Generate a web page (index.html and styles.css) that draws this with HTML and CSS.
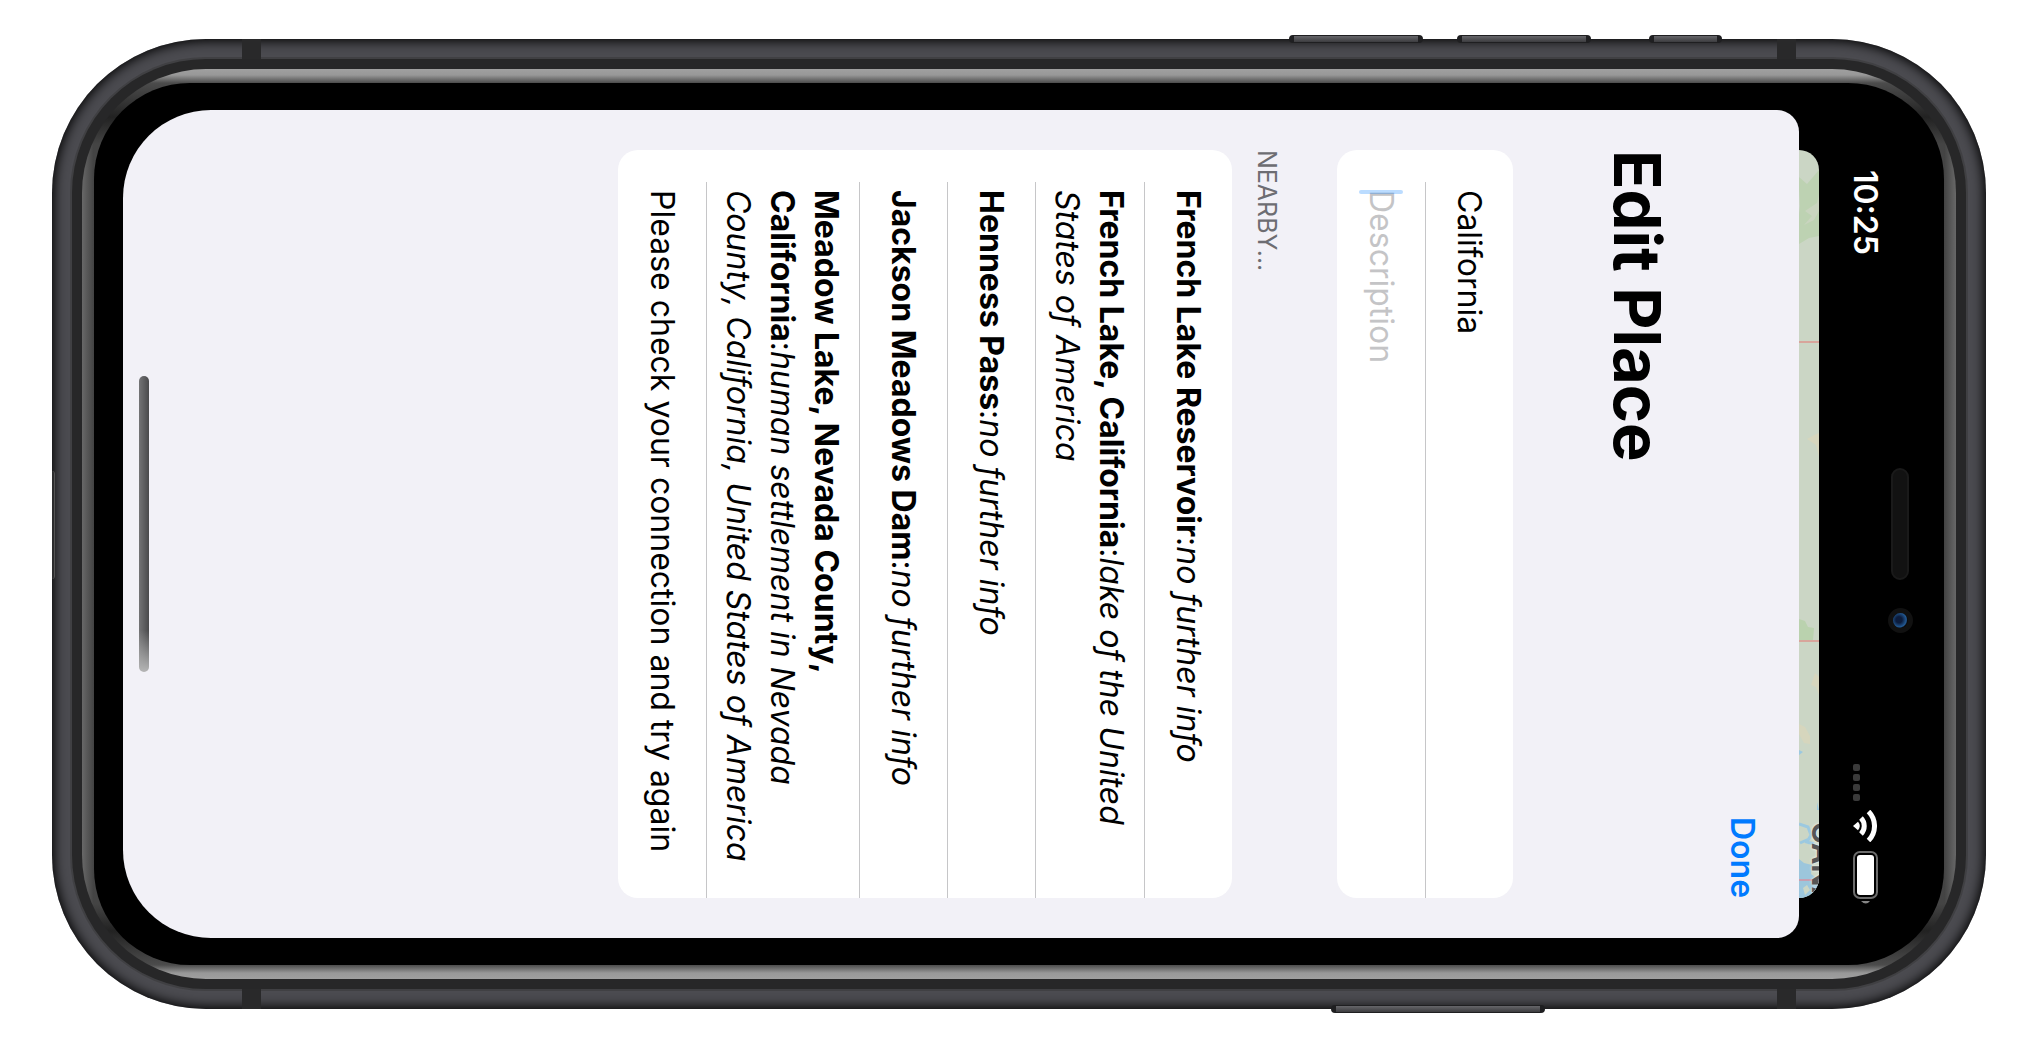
FILE: index.html
```html
<!DOCTYPE html>
<html lang="en">
<head>
<meta charset="utf-8">
<meta name="viewport" content="width=device-width, initial-scale=1">
<title>Edit Place</title>
<link rel="stylesheet" href="styles.css">
</head>
<body>
<div class="phone">
  <span class="key key-volume-down"></span>
  <span class="key key-volume-up"></span>
  <span class="key key-mute"></span>
  <span class="key key-power"></span>
  <div class="metal">
    <span class="antenna antenna-start antenna-top"></span>
    <span class="antenna antenna-end antenna-top"></span>
    <span class="antenna antenna-start antenna-bottom"></span>
    <span class="antenna antenna-end antenna-bottom"></span>
    <span class="tray"></span>
    <div class="bezel">
      <div class="rim">
        <div class="glass">
          <main class="sheet">
            <nav class="nav"><button class="done" type="button">Done</button></nav>
            <h1 class="title">Edit Place</h1>
            <form class="card">
              <div class="row"><input class="field" type="text" aria-label="Place name" value="California"></div>
              <div class="row"><input class="field" type="text" aria-label="Description" placeholder="Description"><span class="caret"></span></div>
            </form>
            <h2 class="section-title">NEARBY...</h2>
            <ul class="card">
              <li class="row"><p><b>French Lake Reservoir</b>:<i>no further info</i></p></li>
              <li class="row"><p><b>French Lake, California</b>:<i>lake of the United States of America</i></p></li>
              <li class="row"><p><b>Henness Pass</b>:<i>no further info</i></p></li>
              <li class="row"><p><b>Jackson Meadows Dam</b>:<i>no further info</i></p></li>
              <li class="row"><p><b>Meadow Lake, Nevada County, California</b>:<i>human settlement in Nevada County, California, United States of America</i></p></li>
              <li class="row"><p>Please check your connection and try again</p></li>
            </ul>
            <span class="home-indicator"></span>
          </main>
          <div class="map">
            <svg class="map-art" viewBox="0 0 20 748" preserveAspectRatio="none" aria-hidden="true">
              <path fill="#bdd2b2" d="M0 27l8 7 12-14v66l-10 2-10 6V64l1-8-1-16z"/>
              <path fill="#c9d4bf" d="M20 44l-2 9-12 8 7 5-8 9 10-5 5-9z"/>
              <path fill="#d6d6bd" d="M8 289l7-4 5-2v24l-3-12zM16 523l-4 12 5 2 3 8v-18zM0 574l6 3 5 9v8l-6-1-5-9z"/>
              <path fill="#bad2ae" d="M0 469l6 2 3 6 6 1-1 12-14 1z"/>
              <path stroke="#d8a59b" stroke-width="2" d="M0 192h20M0 491h20"/>
              <path fill="#9cc9e0" d="M0 600l4 2-4 3zM18 652l2 8h-2z"/>
              <path fill="none" stroke="#9cc9e0" stroke-width="3" d="M0 674l9 3 3 8-4 7 7 2M10 689l-9 4"/>
              <path fill="#9cc6dc" d="M0 709l5 4 8 2-1 9 8 6v18H0z"/>
              <path fill="#cbd6c5" d="M4 738l4-3 3 5-5 5z"/>
              <path stroke="#c79eb0" stroke-width="2" d="M0 730h20"/>
            </svg>
            <span class="map-label">CANA</span>
          </div>
          <div class="status">
            <time class="clock">10:25</time>
            <div class="indicators">
              <svg class="signal" viewBox="0 0 24 37" aria-hidden="true">
                <g fill="#3a3a3a"><rect width="7" height="7" rx="2"/><rect y="10" width="7" height="7" rx="2"/><rect y="20" width="7" height="7" rx="2"/><rect y="30" width="7" height="7" rx="2"/></g>
              </svg>
              <svg class="wifi" viewBox="0 0 24 32" aria-hidden="true">
                <path fill="#fff" d="M0 16l5-4.200a6.500 6.500 0 0 1 0 8.400z"/>
                <path fill="none" stroke="#fff" stroke-width="5" d="M8 8a11.500 11.500 0 0 1 0 16M15.500 1.500a20.500 20.500 0 0 1 0 29"/>
              </svg>
              <svg class="battery" viewBox="0 0 25 53" aria-hidden="true">
                <rect x="1" y="1" width="23" height="46" rx="6" fill="none" stroke="#6c6c6c" stroke-width="2"/>
                <rect x="4" y="4" width="17" height="40" rx="3" fill="#fff"/>
                <path fill="#858585" d="M8 50h9q-4 5-9 0z"/>
              </svg>
            </div>
          </div>
          <div class="notch">
            <span class="speaker"></span>
            <span class="camera"></span>
          </div>
        </div>
      </div>
    </div>
  </div>
</div>
</body>
</html>
```
FILE: styles.css
```css
* { box-sizing: border-box; }

body {
  display: flex;
  height: 100vh;
  margin: 0;
  background: #fff;
  color: #000;
  font-family: Inter, "Liberation Sans", sans-serif;
  font-size: 32px;
}

/* Handset, lying on its side */
.phone {
  position: relative;
  display: flex;
  flex: 1;
  margin: 39px 39px 39px 52px;
}

.metal, .bezel, .rim { display: flex; flex: 1; }

.metal {
  position: relative;
  padding: 20px;
  border-radius: 154px;
  background: #4b4b50;
  box-shadow: inset 0 0 12px 2px #000;
}

.bezel {
  padding: 10px;
  border-radius: 134px;
  background: #272728;
  box-shadow: 0 0 0 2px #404043;
}

.rim {
  padding: 14px 12px;
  border-radius: 124px;
  background:
    linear-gradient(90deg, #686868, #424242) 0 50% / 12px calc(100% - 150px) no-repeat,
    linear-gradient(270deg, #686868, #424242) 100% 50% / 12px calc(100% - 150px) no-repeat,
    linear-gradient(#a0a0a0, #989898 6px, #4c4c4c 14px, #222 48px, #444 75px, #444 calc(100% - 75px), #222 calc(100% - 48px), #4c4c4c calc(100% - 14px), #989898 calc(100% - 6px), #a0a0a0);
}

.glass {
  display: flex;
  flex: 1;
  padding: 27px 0 27px 29px;
  border-radius: 96px;
  background: #000;
}

.antenna {
  position: absolute;
  width: 19px;
  height: 20px;
  background: #29292a;
}
.antenna-start { left: 190px; }
.antenna-end { right: 190px; }
.antenna-top { top: 0; }
.antenna-bottom { bottom: 0; }

.tray {
  position: absolute;
  top: 432px;
  left: 0;
  width: 3px;
  height: 108px;
  border-radius: 0 3px 3px 0;
  background: #2c2c2d;
  border-right: 1px solid #555;
}

.key {
  position: absolute;
  z-index: 1;
  top: -4px;
  height: 8px;
  border: solid #1f1f21;
  border-width: 1px 5px;
  border-radius: 4px;
  background: linear-gradient(#66666a, #3c3c3f);
}
.key-volume-down { right: 563px; width: 134px; }
.key-volume-up { right: 395px; width: 134px; }
.key-mute { right: 264px; width: 73px; }
.key-power { top: auto; bottom: -4px; right: 441px; width: 214px; }

/* Sheet: lines run top to bottom, blocks stack right to left */
.sheet {
  position: relative;
  flex: 1;
  padding-inline: 40px;
  border-radius: 88px 22px 22px 88px;
  background: #f2f1f7;
  writing-mode: vertical-rl;
  text-orientation: sideways;
}

.nav {
  display: flex;
  justify-content: flex-end;
  align-items: center;
  block-size: 114px;
}

.done {
  padding: 0;
  border: 0;
  background: none;
  color: #007aff;
  font: inherit;
  font-weight: 600;
  line-height: 44px;
  writing-mode: inherit;
}

.title {
  margin: 0;
  font-size: 65px;
  font-weight: 700;
  line-height: 96px;
  margin-block-end: 76px;
}

.section-title {
  margin: 0;
  margin-block: 53px 18px;
  color: #6d6d72;
  font-size: 25px;
  font-weight: 400;
  line-height: 34px;
}

.card {
  margin: 0;
  padding: 0;
  border-radius: 20px;
  background: #fff;
  list-style: none;
}

.row {
  position: relative;
  display: flex;
  align-items: center;
  min-block-size: 88px;
  margin-inline-start: 32px;
  padding-block: 11px 10px;
  padding-inline: 8px 32px;
  line-height: 44px;
}
.row:not(:last-child) { border-block-end: 1px solid #c6c6c8; padding-block-end: 9px; }
.row p { margin: 0; }
.row b { font-weight: 700; }

.field {
  flex: 1;
  min-inline-size: 0;
  block-size: 44px;
  padding: 0;
  border: 0;
  outline: 0;
  background: none;
  color: inherit;
  font: inherit;
  writing-mode: vertical-rl;
  text-orientation: sideways;
}
.field::placeholder { color: #c4c4c6; opacity: 1; }

.caret {
  position: absolute;
  inset-block: 22px;
  inset-inline-start: 8px;
  inline-size: 4px;
  border-radius: 2px;
  background: #007aff44;
}

.home-indicator {
  position: absolute;
  top: 50%;
  left: 16px;
  width: 10px;
  height: 296px;
  margin-top: -148px;
  border-radius: 5px;
  background:
    linear-gradient(transparent 86%, #b5b5b5),
    linear-gradient(90deg, #747476, #4a4a4c);
}

/* Map peeking out behind the sheet */
.map {
  position: relative;
  width: 20px;
  margin-block: 40px;
  border-radius: 0 20px 20px 0;
  background: #cbd6c5;
  overflow: hidden;
}
.map-art { display: block; width: 100%; height: 100%; }
.map-label {
  position: absolute;
  bottom: -10px;
  left: 6px;
  color: #555;
  font-size: 29px;
  font-weight: 700;
  line-height: 34px;
  writing-mode: vertical-rl;
  text-orientation: sideways;
  text-shadow: 0 0 3px #fff;
}

.status {
  display: flex;
  flex-direction: column;
  justify-content: space-between;
  align-items: center;
  width: 42px;
  margin-left: 25px;
  padding-block: 60px 34px;
}
.clock {
  color: #fff;
  font-weight: 600;
  line-height: 42px;
  writing-mode: vertical-rl;
  text-orientation: sideways;
}
.indicators { display: flex; flex-direction: column; gap: 9px; }
.indicators svg { display: block; }
.signal { width: 24px; height: 37px; }
.wifi { width: 24px; height: 32px; }
.battery { width: 25px; height: 53px; }

.notch {
  display: grid;
  grid-template-rows: 1fr auto 1fr;
  justify-items: center;
  width: 26px;
  margin-inline: 1px 31px;
}
.speaker {
  grid-row: 2;
  width: 18px;
  height: 112px;
  border: 2px solid #1a1a1a;
  border-radius: 9px;
  background: #121212;
}
.camera {
  grid-row: 3;
  width: 25px;
  height: 25px;
  margin-top: 28px;
  border: 5px solid #111;
  border-radius: 50%;
  background: radial-gradient(circle at 40% 45%, #0c1c3c 25%, #235a94 60%, #0a0a0c 70%);
}
```
